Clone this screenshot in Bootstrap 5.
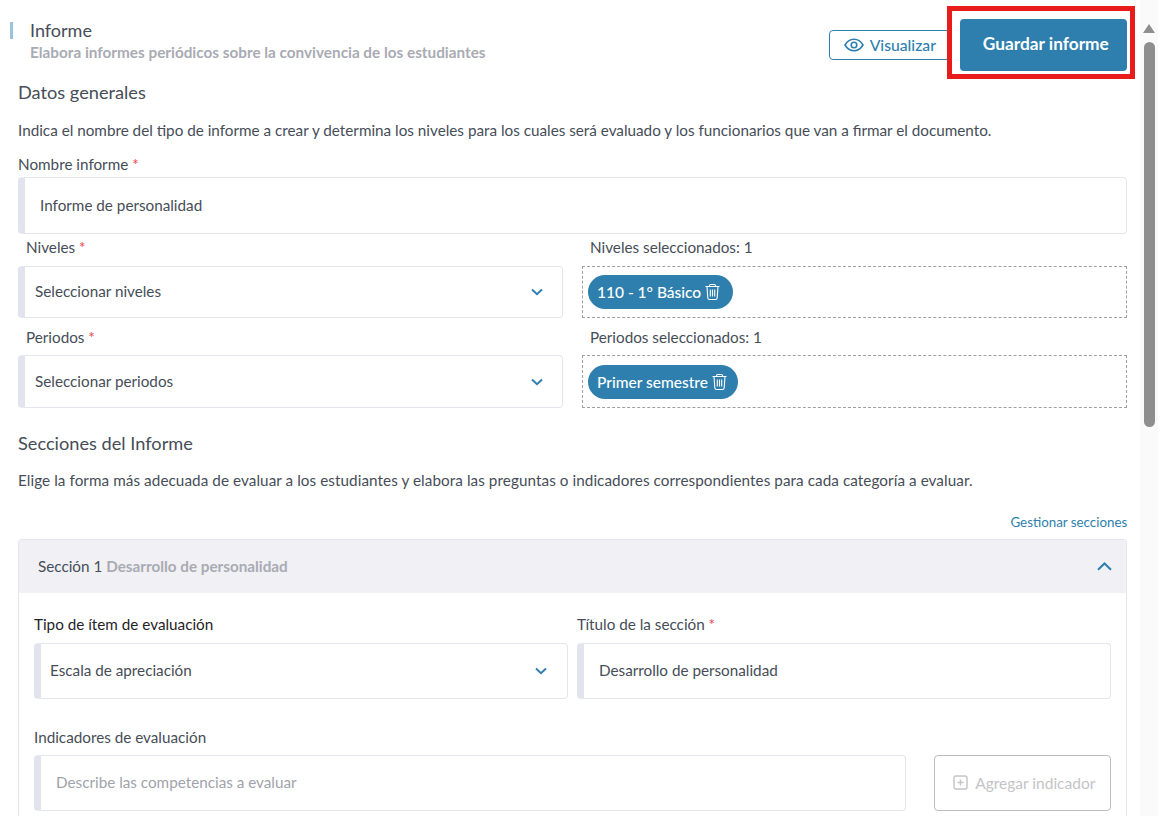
<!DOCTYPE html>
<html lang="es">
<head>
<meta charset="utf-8">
<title>Informe</title>
<link rel="stylesheet" href="https://cdn.jsdelivr.net/npm/bootstrap@5.3.0/dist/css/bootstrap.min.css">
<style>
html,body{height:816px;overflow:hidden;background:#fff}
body{font-family:"Lato","Noto Sans",sans-serif;color:#464d57;font-size:14px;line-height:20px}
.shell{height:816px;width:1158px}
.pagecol{width:1127px;margin-left:18px;position:relative}
.headrow{height:71px;padding-top:18px}
.stripe{width:3px;height:17px;background:#9cc3d9;margin-left:-8px;margin-top:4px}
.titlebox{margin-left:17px}
.ttl{font-size:18px;line-height:24px;color:#464d57}
.sub{font-size:15.300px;line-height:20px;color:#a9abb3;font-weight:700;margin-top:0}
.actions{margin-top:1px}
.btn-view{width:121px;height:30px;margin-top:11px;border:1px solid #2e7fad;border-radius:4px;color:#2e7fad;background:#fff;font-size:15.700px;font-weight:500;margin-right:10px;gap:6px;padding:0 0 1px}
.btn-save{width:167px;height:52px;background:#2e7fad;color:#fff;border-radius:4px;font-size:17.300px;font-weight:700;border:0;padding:0 0 2px 4px}
.redbox{position:absolute;left:929px;top:6px;width:188px;height:73px;border:5px solid #e91c1c}
.h-sec{font-size:18.200px;line-height:24px;color:#464d57}
.lbl{font-size:15.250px;line-height:20px}
.lbl-wide{letter-spacing:.07px}
.req{color:#e8414a}
.field{border:1px solid #e4e6ef;border-left:7px solid #e1e4ee;border-radius:4px;background:#fff;font-size:15.250px;padding-bottom:2px}
.field svg{margin-top:2px}
.f-name{height:57px;padding-left:15px}
.f-sel{height:52px;padding-left:10px;padding-right:19px}
.f-sel2{height:53px}
.pickbox{height:52px;border:1px dashed #a0a0a0;padding-left:5px}
.pickbox2{height:53px}
.chip{background:#2e7fad;color:#fff;border-radius:17px;height:34px;font-size:15.500px;font-weight:500;padding:0 12px 0 9px;gap:3px}
.half{width:545px}
.gap-col{gap:19px}
.lnk{font-size:13.350px;color:#2e7fad;line-height:18px;text-decoration:none}
.secbox{border:1px solid #e4e6ef;border-bottom:0;border-radius:4px 4px 0 0;height:277px}
.sechead{height:53px;background:#f0f0f5;padding:0 14px 2px 19px;font-size:15.250px;color:#464d57}
.sechead svg{margin-top:2px}
.sechead span{color:#a9abb3;font-weight:700}
.secbody{padding:0 15px}
.f-tall{height:56px;padding-left:15px;padding-right:19px}
.ph{color:#a0a3ab}
.w-a{width:534px}
.w-b{width:534px}
.w-c{width:872px}
.btn-add{width:177px;height:56px;border:1px solid #bcbcbc;border-radius:4px;color:#c3c4c8;font-size:15.500px;gap:7px;background:#fff;padding:0 0 1px 3px}
.track{width:18px;height:816px;background:#fafafa;margin-left:13px}
.thumb{width:11px;height:385px;background:#8e8e8e;border-radius:6px;margin:9px auto 0}
.arrow{width:0;height:0;border-left:6px solid transparent;border-right:6px solid transparent;border-bottom:9px solid #8e8e8e;margin:24px auto 0}
.black{color:#1f2328}
</style>
</head>
<body>
<div class="shell d-flex">
<main class="pagecol">
  <div class="redbox"></div>
  <header class="headrow d-flex justify-content-between">
    <div class="d-flex">
      <div class="stripe"></div>
      <div class="titlebox">
        <div class="ttl">Informe</div>
        <div class="sub">Elabora informes periódicos sobre la convivencia de los estudiantes</div>
      </div>
    </div>
    <div class="actions d-flex align-items-start">
      <button class="btn-view d-flex align-items-center justify-content-center" type="button">
        <svg width="20" height="14" viewBox="0 0 20 14" fill="none" stroke="#2e7fad" stroke-width="1.6"><path d="M1 7C3.2 3.2 6.3 1.3 10 1.3S16.800 3.2 19 7C16.800 10.800 13.700 12.700 10 12.700S3.200 10.800 1 7Z"/><circle cx="10" cy="7" r="2.800"/></svg>
        Visualizar
      </button>
      <button class="btn-save" type="button">Guardar informe</button>
    </div>
  </header>

  <div class="h-sec" style="margin-top:9px">Datos generales</div>
  <p class="lbl mb-0" style="margin-top:16px">Indica el nombre del tipo de informe a crear y determina los niveles para los cuales será evaluado y los funcionarios que van a firmar el documento.</p>
  <div class="lbl" style="margin-top:14px;margin-bottom:3px">Nombre informe <span class="req">*</span></div>
  <div class="field f-name d-flex align-items-center">Informe de personalidad</div>

  <div class="d-flex gap-col" style="margin-top:3px">
    <div class="half">
      <div class="lbl ps-2" style="margin-bottom:9px">Niveles <span class="req">*</span></div>
      <div class="field f-sel d-flex align-items-center justify-content-between">Seleccionar niveles
        <svg width="12" height="8" viewBox="0 0 12 8" fill="none" stroke="#2e7fad" stroke-width="2"><path d="M1 1.500 6 6.200 11 1.500"/></svg>
      </div>
    </div>
    <div class="half">
      <div class="lbl ps-2" style="margin-bottom:9px">Niveles seleccionados: 1</div>
      <div class="pickbox d-flex align-items-center">
        <div class="chip d-flex align-items-center">110 - 1° Básico
          <svg width="17" height="18" viewBox="0 0 17 18" fill="none" stroke="#fff" stroke-width="1.100"><path d="M1.500 3.500H15.500M5.500 3.500V2.500Q5.500 1.500 6.500 1.500H10.500Q11.500 1.500 11.500 2.500V3.500M3 3.500 3.800 14.800Q3.900 16.500 5.500 16.500H11.500Q13.100 16.500 13.200 14.800L14 3.500M6.300 6.500V13.500M8.500 6.500V13.500M10.700 6.500V13.500"/></svg>
        </div>
      </div>
    </div>
  </div>

  <div class="d-flex gap-col" style="margin-top:9px">
    <div class="half">
      <div class="lbl ps-2" style="margin-bottom:8px">Periodos <span class="req">*</span></div>
      <div class="field f-sel f-sel2 d-flex align-items-center justify-content-between">Seleccionar periodos
        <svg width="12" height="8" viewBox="0 0 12 8" fill="none" stroke="#2e7fad" stroke-width="2"><path d="M1 1.500 6 6.200 11 1.500"/></svg>
      </div>
    </div>
    <div class="half">
      <div class="lbl ps-2" style="margin-bottom:8px">Periodos seleccionados: 1</div>
      <div class="pickbox pickbox2 d-flex align-items-center">
        <div class="chip d-flex align-items-center" style="padding-right:10px">Primer semestre
          <svg width="17" height="18" viewBox="0 0 17 18" fill="none" stroke="#fff" stroke-width="1.100"><path d="M1.500 3.500H15.500M5.500 3.500V2.500Q5.500 1.500 6.500 1.500H10.500Q11.500 1.500 11.500 2.500V3.500M3 3.500 3.800 14.800Q3.900 16.500 5.500 16.500H11.500Q13.100 16.500 13.200 14.800L14 3.500M6.300 6.500V13.500M8.500 6.500V13.500M10.700 6.500V13.500"/></svg>
        </div>
      </div>
    </div>
  </div>

  <div class="h-sec" style="margin-top:23px">Secciones del Informe</div>
  <p class="lbl lbl-wide mb-0" style="margin-top:15px">Elige la forma más adecuada de evaluar a los estudiantes y elabora las preguntas o indicadores correspondientes para cada categoría a evaluar.</p>
  <div class="text-end" style="margin-top:22px;margin-bottom:7px"><a class="lnk" href="#">Gestionar secciones</a></div>

  <section class="secbox">
    <div class="sechead d-flex align-items-center justify-content-between">
      <div>Sección 1 <span>Desarrollo de personalidad</span></div>
      <svg width="15" height="9" viewBox="0 0 15 9" fill="none" stroke="#2e7fad" stroke-width="2"><path d="M1 7.800 7.500 1.500 14 7.800"/></svg>
    </div>
    <div class="secbody">
      <div class="d-flex" style="gap:9px;margin-top:21px">
        <div class="w-a">
          <div class="lbl black" style="margin-bottom:9px">Tipo de ítem de evaluación</div>
          <div class="field f-tall d-flex align-items-center justify-content-between" style="padding-left:9px;padding-right:20px">Escala de apreciación
            <svg width="12" height="8" viewBox="0 0 12 8" fill="none" stroke="#2e7fad" stroke-width="2"><path d="M1 1.500 6 6.200 11 1.500"/></svg>
          </div>
        </div>
        <div class="w-b">
          <div class="lbl" style="margin-bottom:9px">Título de la sección <span class="req">*</span></div>
          <div class="field f-tall d-flex align-items-center">Desarrollo de personalidad</div>
        </div>
      </div>
      <div class="lbl" style="margin-top:28px;margin-bottom:8px">Indicadores de evaluación</div>
      <div class="d-flex justify-content-between">
        <div class="field f-tall w-c d-flex align-items-center ph">Describe las competencias a evaluar</div>
        <button class="btn-add d-flex align-items-center justify-content-center" type="button" disabled>
          <svg width="15" height="15" viewBox="0 0 15 15" fill="none" stroke="#c3c4c8" stroke-width="1.400"><rect x="1" y="1" width="13" height="13" rx="2"/><path d="M7.500 4.500V10.500M4.500 7.500H10.500"/></svg>
          Agregar indicador
        </button>
      </div>
    </div>
  </section>
</main>
<aside class="track"><div class="arrow"></div><div class="thumb"></div></aside>
</div>
</body>
</html>
